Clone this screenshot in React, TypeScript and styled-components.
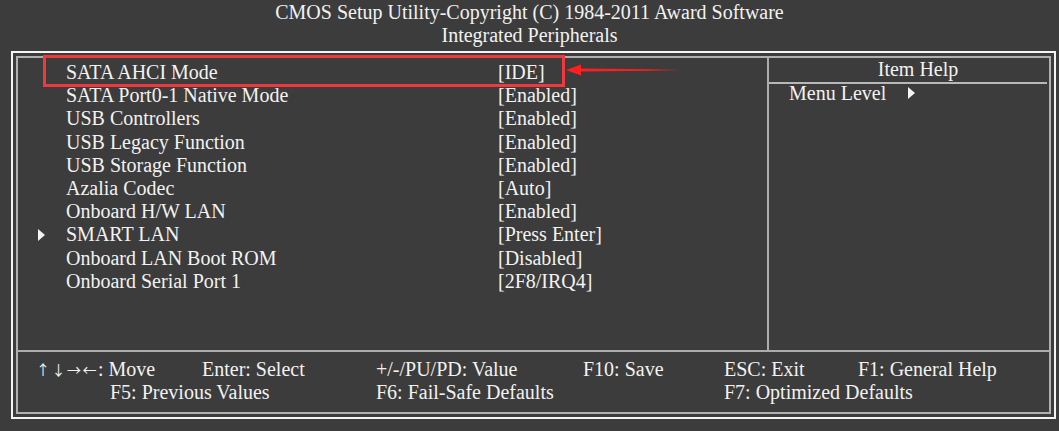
import * as React from "react";
import styled, { createGlobalStyle } from "styled-components";

const GlobalStyle = createGlobalStyle`
  html, body {
    margin: 0;
    padding: 0;
    background: #3c3c3c;
  }
  body {
    width: 1059px;
    height: 431px;
    overflow: hidden;
    font-family: "Liberation Serif", "Times New Roman", serif;
    color: #f2f2f2;
  }
`;

interface Item {
    label: string;
    value: string;
    submenu?: boolean;
}

const items: Item[] = [
    { label: "SATA AHCI Mode", value: "[IDE]" },
    { label: "SATA Port0-1 Native Mode", value: "[Enabled]" },
    { label: "USB Controllers", value: "[Enabled]" },
    { label: "USB Legacy Function", value: "[Enabled]" },
    { label: "USB Storage Function", value: "[Enabled]" },
    { label: "Azalia Codec", value: "[Auto]" },
    { label: "Onboard H/W LAN", value: "[Enabled]" },
    { label: "SMART LAN", value: "[Press Enter]", submenu: true },
    { label: "Onboard LAN Boot ROM", value: "[Disabled]" },
    { label: "Onboard Serial Port 1", value: "[2F8/IRQ4]" },
];

// 底部按键说明：col 为起始列，span 为跨列数；keys 为方向键前缀
const hints: { text: string; keys?: string; row: number; col: number; span?: number }[] = [
    { keys: "↑↓→←", text: ": Move", row: 1, col: 1, span: 2 },
    { text: "Enter: Select", row: 1, col: 3 },
    { text: "+/-/PU/PD: Value", row: 1, col: 4 },
    { text: "F10: Save", row: 1, col: 5 },
    { text: "ESC: Exit", row: 1, col: 6 },
    { text: "F1: General Help", row: 1, col: 7 },
    { text: "F5: Previous Values", row: 2, col: 2, span: 2 },
    { text: "F6: Fail-Safe Defaults", row: 2, col: 4 },
    { text: "F7: Optimized Defaults", row: 2, col: 6, span: 2 },
];

const Triangle: React.FC = () => (
    <svg width={7} height={12} viewBox="0 0 7 12">
        <polygon points="0,0 7,6 0,12" fill="#f4f4f4" />
    </svg>
);

export default function App() {
    return (
        <>
            <GlobalStyle />
            <Screen>
                <Title>
                    <div>CMOS Setup Utility-Copyright (C) 1984-2011 Award Software</div>
                    <div>Integrated Peripherals</div>
                </Title>
                <OuterFrame>
                    <InnerFrame>
                        <MainArea>
                            <MenuPanel>
                                {items.map((it) => (
                                    <Row key={it.label}>
                                        <Marker>{it.submenu && <Triangle />}</Marker>
                                        <Label>{it.label}</Label>
                                        <Value>{it.value}</Value>
                                    </Row>
                                ))}
                                <Highlight />
                                <Arrow width="112" height="14" viewBox="0 0 112 14">
                                    <defs>
                                        <linearGradient id="tail" x1="0" x2="1" y1="0" y2="0">
                                            <stop offset="0" stopColor="#ff1f1f" />
                                            <stop offset="0.7" stopColor="#f02020" />
                                            <stop offset="1" stopColor="#f02020" stopOpacity="0.2" />
                                        </linearGradient>
                                    </defs>
                                    <polygon points="0,7 15,1.5 15,12.5" fill="#ff1f1f" />
                                    <polygon points="14,5.5 112,6.6 112,7.4 14,8.5" fill="url(#tail)" />
                                </Arrow>
                            </MenuPanel>
                            <HelpPanel>
                                <HelpTitle>Item Help</HelpTitle>
                                <HelpLine>
                                    Menu Level
                                    <Triangle />
                                </HelpLine>
                            </HelpPanel>
                        </MainArea>
                        <Footer>
                            {hints.map((k) => (
                                <KeyHint
                                    key={k.text}
                                    $row={k.row}
                                    $col={k.col}
                                    $span={k.span ?? 1}
                                >
                                    {k.keys && <Arrows>{k.keys}</Arrows>}
                                    {k.text}
                                </KeyHint>
                            ))}
                        </Footer>
                    </InnerFrame>
                </OuterFrame>
            </Screen>
        </>
    );
}

const Screen = styled.div`
    width: 1059px;
    height: 431px;
    font-size: 20px;
`;

const Title = styled.div`
    text-align: center;
    line-height: 23px;
    padding-top: 1px;
    height: 50px;
`;

const OuterFrame = styled.div`
    margin-left: 11px;
    width: 1035px;
    border: 2px solid #f4f4f4;
    padding: 3px;
`;

const InnerFrame = styled.div`
    border: 2px solid #b0b0b0;
`;

const MainArea = styled.div`
    display: grid;
    grid-template-columns: 751px 1fr;
    height: 292px;
    border-bottom: 2px solid #acacac;
`;

const MenuPanel = styled.div`
    position: relative;
    border-right: 2px solid #acacac;
    padding-top: 3px;
`;

const Row = styled.div`
    display: grid;
    grid-template-columns: 48px 432px 1fr;
    align-items: center;
    height: 23.2px;
    line-height: 23.2px;
    white-space: nowrap;
`;

const Marker = styled.div`
    display: flex;
    align-items: center;
    padding-left: 20px;
    height: 100%;
`;

const Label = styled.div``;

const Value = styled.div``;

const Highlight = styled.div`
    position: absolute;
    left: 25px;
    top: -3px;
    width: 516px;
    height: 26px;
    border: 3px solid #ee3a3e;
    pointer-events: none;
`;

const Arrow = styled.svg`
    position: absolute;
    left: 548px;
    top: 5px;
`;

const HelpPanel = styled.div`
    display: flex;
    flex-direction: column;
`;

const HelpTitle = styled.div`
    text-align: center;
    line-height: 23px;
    height: 24px;
    padding-left: 20px;
    margin-right: 2px;
    border-bottom: 2px solid #b8b8b8;
`;

const HelpLine = styled.div`
    display: flex;
    align-items: center;
    gap: 22px;
    padding-left: 20px;
    line-height: 18px;
`;

const Footer = styled.div`
    display: grid;
    grid-template-columns: 74px 92px 174px 207px 141px 134px 1fr;
    grid-auto-rows: 22.5px;
    line-height: 22.5px;
    padding: 6px 0 3px 18px;
    height: 60px;
    box-sizing: border-box;
    white-space: nowrap;
`;

const KeyHint = styled.div<{ $row: number; $col: number; $span: number }>`
    grid-row: ${(p) => p.$row};
    grid-column: ${(p) => `${p.$col} / span ${p.$span}`};
`;

const Arrows = styled.span`
    font-family: "Noto Sans CJK SC", sans-serif;
    font-size: 14px;
    letter-spacing: 1.5px;
    vertical-align: 1px;
`;
